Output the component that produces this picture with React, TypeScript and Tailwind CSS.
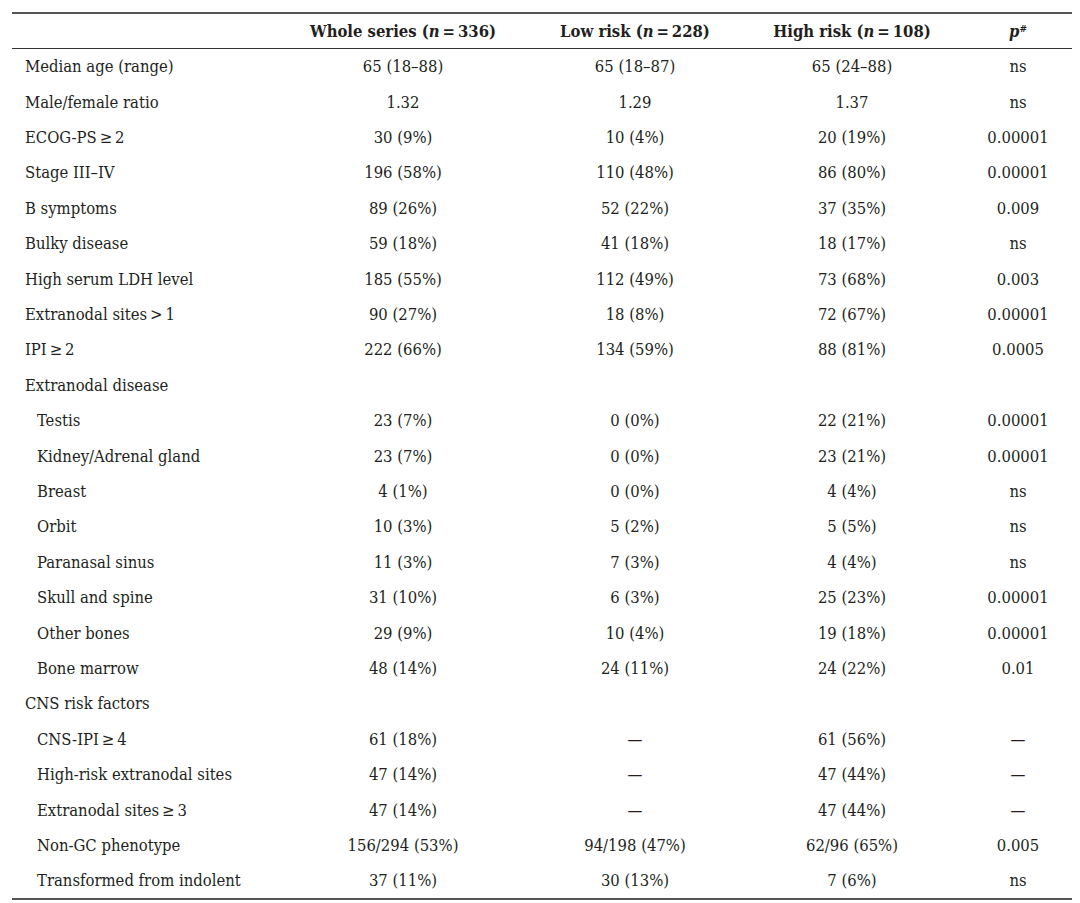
const rows: [string, string, string, string, string, boolean?][] = [
  ["Median age (range)", "65 (18–88)", "65 (18–87)", "65 (24–88)", "ns"],
  ["Male/female ratio", "1.32", "1.29", "1.37", "ns"],
  ["ECOG-PS\u2009≥\u20092", "30 (9%)", "10 (4%)", "20 (19%)", "0.00001"],
  ["Stage III–IV", "196 (58%)", "110 (48%)", "86 (80%)", "0.00001"],
  ["B symptoms", "89 (26%)", "52 (22%)", "37 (35%)", "0.009"],
  ["Bulky disease", "59 (18%)", "41 (18%)", "18 (17%)", "ns"],
  ["High serum LDH level", "185 (55%)", "112 (49%)", "73 (68%)", "0.003"],
  ["Extranodal sites\u2009>\u20091", "90 (27%)", "18 (8%)", "72 (67%)", "0.00001"],
  ["IPI\u2009≥\u20092", "222 (66%)", "134 (59%)", "88 (81%)", "0.0005"],
  ["Extranodal disease", "", "", "", ""],
  ["Testis", "23 (7%)", "0 (0%)", "22 (21%)", "0.00001", true],
  ["Kidney/Adrenal gland", "23 (7%)", "0 (0%)", "23 (21%)", "0.00001", true],
  ["Breast", "4 (1%)", "0 (0%)", "4 (4%)", "ns", true],
  ["Orbit", "10 (3%)", "5 (2%)", "5 (5%)", "ns", true],
  ["Paranasal sinus", "11 (3%)", "7 (3%)", "4 (4%)", "ns", true],
  ["Skull and spine", "31 (10%)", "6 (3%)", "25 (23%)", "0.00001", true],
  ["Other bones", "29 (9%)", "10 (4%)", "19 (18%)", "0.00001", true],
  ["Bone marrow", "48 (14%)", "24 (11%)", "24 (22%)", "0.01", true],
  ["CNS risk factors", "", "", "", ""],
  ["CNS-IPI\u2009≥\u20094", "61 (18%)", "—", "61 (56%)", "—", true],
  ["High-risk extranodal sites", "47 (14%)", "—", "47 (44%)", "—", true],
  ["Extranodal sites\u2009≥\u20093", "47 (14%)", "—", "47 (44%)", "—", true],
  ["Non-GC phenotype", "156/294 (53%)", "94/198 (47%)", "62/96 (65%)", "0.005", true],
  ["Transformed from indolent", "37 (11%)", "30 (13%)", "7 (6%)", "ns", true],
];

const grid = "grid grid-cols-[276px_230px_234px_200px_120px]";

function N({ v }: { v: string }) {
  return (
    <>
      (<i>n</i>
      {"\u2009=\u2009"}
      {v})
    </>
  );
}

export default function App() {
  return (
    <div
      className="w-[1080px] h-[903px] bg-white text-[#231f20] text-[16.5px] overflow-hidden"
      style={{ fontFamily: '"DejaVu Serif Condensed", "DejaVu Serif", "Liberation Serif", serif' }}
    >
      <div className="ml-[12px] w-[1060px] pt-[12px]">
        {/* header */}
        <div className={`${grid} h-[37px] pt-[2px] border-t-2 border-b border-t-[#555] border-b-[#333] items-center font-bold`}>
          <div />
          <div className="text-center">
            Whole series <N v="336" />
          </div>
          <div className="text-center">
            Low risk <N v="228" />
          </div>
          <div className="text-center">
            High risk <N v="108" />
          </div>
          <div className="text-center pl-[12px]">
            <i>p</i>
            <sup className="text-[10px]">#</sup>
          </div>
        </div>
        {/* body */}
        <div className="border-b-2 border-b-[#555]">
          {rows.map(([label, a, b, c, p, indent]) => (
            <div key={label} className={`${grid} h-[35.4px] items-center pt-[2px]`}>
              <div className={indent ? "pl-[25px]" : "pl-[13px]"}>{label}</div>
              <div className="text-center">{a}</div>
              <div className="text-center">{b}</div>
              <div className="text-center">{c}</div>
              <div className="text-center pl-[12px]">{p}</div>
            </div>
          ))}
        </div>
      </div>
    </div>
  );
}
